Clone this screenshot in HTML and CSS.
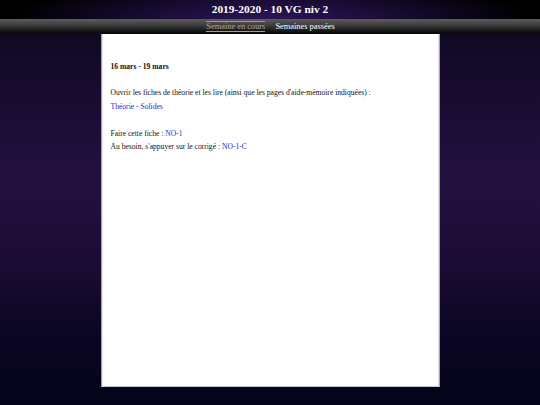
FILE: index.html
```html
<!DOCTYPE html>
<html lang="fr">
<head>
<meta charset="utf-8">
<title>2019-2020 - 10 VG niv 2</title>
<link rel="stylesheet" href="styles.css">
</head>
<body>
<header class="top">
  <h1 class="title">2019-2020 - 10 VG niv 2</h1>
</header>
<nav class="nav">
  <a class="nav-link current" href="#">Semaine en cours</a>
  <a class="nav-link" href="#">Semaines passées</a>
</nav>
<main class="page">
  <h2 class="week">16 mars - 19 mars</h2>
  <p class="block">Ouvrir les fiches de théorie et les lire (ainsi que les pages d'aide-mémoire indiquées) :<br>
  <a class="link" href="#">Théorie - Solides</a></p>
  <p class="block">Faire cette fiche : <a class="link" href="#">NO-1</a><br>
  Au besoin, s'appuyer sur le corrigé : <a class="link" href="#">NO-1-C</a></p>
</main>
</body>
</html>
```

FILE: styles.css
```css
html, body {
  margin: 0;
  padding: 0;
  height: 100%;
}
body {
  font-family: "Liberation Serif", "Times New Roman", serif;
  background: linear-gradient(to bottom, #0b0618 0px, #140a2a 60px, #231040 180px, #1c0c34 260px, #0c0624 330px, #04041a 400px);
  overflow: hidden;
}
.top {
  height: 19px;
  display: flex;
  align-items: center;
  justify-content: center;
  background: radial-gradient(ellipse 260px 40px at 50% 100%, #2c1558 0%, #1a0c36 45%, #000 100%);
}
.title {
  margin: 0;
  color: #fff;
  font-size: 11.4px;
  font-weight: bold;
  line-height: 1;
  padding-top: 1px;
}
.nav {
  height: 15px;
  display: flex;
  justify-content: center;
  align-items: center;
  gap: 10px;
  background: linear-gradient(to bottom, #5c5c5c 0%, #3a3a3a 45%, #161616 80%, #050505 100%);
  padding-left: 1px;
}
.nav-link {
  color: #fff;
  font-size: 8.4px;
  text-decoration: none;
  line-height: 9px;
}
.nav-link.current {
  color: #a8a8a8;
  border-top: 1px solid #9a9a9a;
  border-bottom: 1px solid #9a9a9a;
}
.page {
  box-sizing: border-box;
  width: 338px;
  height: 353px;
  margin: 0 auto;
  background: #fff;
  border: 1px solid #c9c3dc;
  border-top: none;
  padding: 26px 8px 0 8px;
  font-size: 7.6px;
  line-height: 13.4px;
  color: #111;
  transform: translateX(0.5px);
}
.week {
  margin: 0 0 13px 0;
  font-size: 7.6px;
  font-weight: bold;
  line-height: 13.4px;
}
.block {
  margin: 0 0 13.4px 0;
}
.link {
  color: #2a2ad0;
  text-decoration: none;
}
```
